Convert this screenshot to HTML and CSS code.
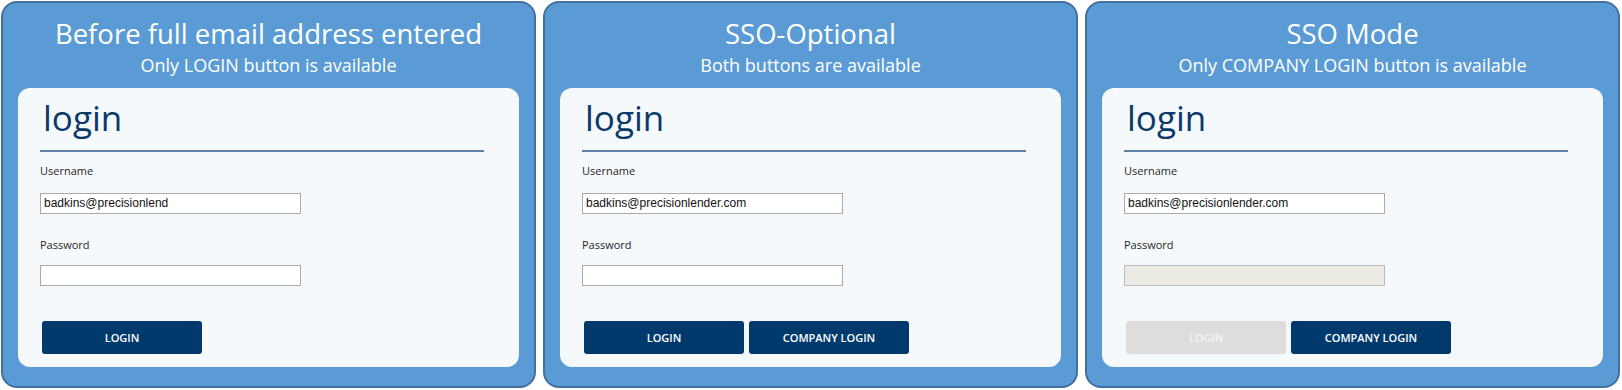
FILE: index.html
```html
<!DOCTYPE html>
<html lang="en">
<head>
  <meta charset="UTF-8" />
  <title>Login Modes</title>
  <link rel="stylesheet" href="styles.css">
</head>
<body>
  <div class="modes">
    <div class="mode">
      <h2>Before full email address entered</h2>
      <p class="mode-sub">Only LOGIN button is available</p>
      <div class="login-card">
        <h1>login</h1>
        <label>Username</label>
        <div class="field">badkins@precisionlend</div>
        <label>Password</label>
        <div class="field password"></div>
        <div class="actions">
          <button class="btn">LOGIN</button>
        </div>
      </div>
    </div>

    <div class="mode">
      <h2>SSO-Optional</h2>
      <p class="mode-sub">Both buttons are available</p>
      <div class="login-card">
        <h1>login</h1>
        <label>Username</label>
        <div class="field">badkins@precisionlender.com</div>
        <label>Password</label>
        <div class="field password"></div>
        <div class="actions">
          <button class="btn">LOGIN</button>
          <button class="btn">COMPANY LOGIN</button>
        </div>
      </div>
    </div>

    <div class="mode">
      <h2>SSO Mode</h2>
      <p class="mode-sub">Only COMPANY LOGIN button is available</p>
      <div class="login-card">
        <h1>login</h1>
        <label>Username</label>
        <div class="field">badkins@precisionlender.com</div>
        <label>Password</label>
        <div class="field password disabled"></div>
        <div class="actions">
          <button class="btn disabled">LOGIN</button>
          <button class="btn">COMPANY LOGIN</button>
        </div>
      </div>
    </div>
  </div>
</body>
</html>
```

FILE: styles.css
```css
* {
  margin: 0;
  padding: 0;
  box-sizing: border-box;
  font-family: 'Open Sans', sans-serif;
}

body {
  background: #fff;
  padding: 1px 0 0 1px;
}

.modes {
  display: flex;
  gap: 7px;
}

.mode {
  width: 535px;
  height: 387px;
  background: #5b9bd5;
  border: 2px solid #41719c;
  border-radius: 16px;
  padding: 0 15px;
  color: #fff;
  text-align: center;
}

.mode h2 {
  font-size: 27.5px;
  font-weight: 400;
  line-height: 34px;
  margin-top: 14px;
}

.mode-sub {
  font-size: 18px;
  line-height: 22px;
  margin-top: 3px;
}

.login-card {
  margin-top: 12px;
  height: 279px;
  background: #f5f9fc;
  border-radius: 12px;
  padding: 8px 35px 0 22px;
  text-align: left;
  color: #222;
  display: flex;
  flex-direction: column;
  align-items: flex-start;
}

.login-card h1 {
  align-self: stretch;
  font-size: 35px;
  font-weight: 400;
  line-height: 44px;
  color: #0b3a6a;
  padding: 0 0 10px 3px;
  border-bottom: 2px solid #5f80a6;
}

.login-card label {
  font-size: 11px;
  line-height: 15px;
  margin-top: 11px;
  color: #1f1f1f;
}

.field {
  width: 261px;
  height: 21px;
  margin-top: 15px;
  border: 1px solid #aaa;
  background: #fff;
  font-family: 'Liberation Sans', Arial, sans-serif;
  font-size: 12px;
  line-height: 19px;
  padding-left: 3px;
  color: #111;
}

.field + label {
  margin-top: 23px;
}

.field.password {
  margin-top: 13px;
}

.field.disabled {
  background: #ebebe4;
  border-color: #bbb;
}

.actions {
  display: flex;
  gap: 5px;
  margin: 35px 0 0 2px;
}

.btn {
  width: 160px;
  height: 33px;
  border: none;
  border-radius: 3px;
  background: #003a6d;
  color: #fff;
  font-size: 11px;
  font-weight: 600;
  cursor: pointer;
}

.btn.disabled {
  background: #dddddd;
  color: #f4f4f4;
  cursor: default;
}
```
